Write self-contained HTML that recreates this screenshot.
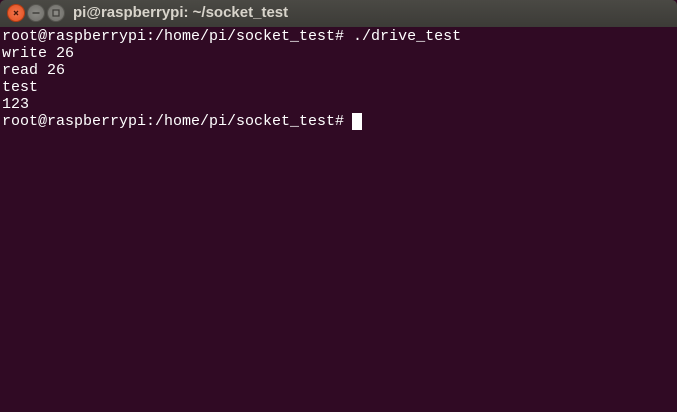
<!DOCTYPE html>
<html><head><style>
html,body{margin:0;padding:0;width:677px;height:412px;overflow:hidden;background:#300a24}
.tb{position:absolute;left:0;top:0;width:677px;height:27px;background:linear-gradient(#4a4944,#3c3b37);border-radius:5px 5px 0 0}
.b{position:absolute;top:4px;width:18px;height:18px;border-radius:50%;box-sizing:border-box}
.t{position:absolute;left:73px;top:4px;font:bold 15px "Liberation Sans",sans-serif;color:#d8d4cb}
pre{position:absolute;left:2px;top:28px;margin:0;font:15px/17px "Liberation Mono",monospace;color:#fff}
.cur{position:absolute;left:352px;top:113px;width:10px;height:17px;background:#fff}
</style></head><body>
<div class="tb">
<div class="b" style="left:7px;background:radial-gradient(#f4764e,#e2501f);border:1px solid #b13c14"><svg width="16" height="16" style="position:absolute;left:0;top:0"><path d="M6 6L10 10M10 6L6 10" stroke="#4a1a0a" stroke-width="1.3"/></svg></div>
<div class="b" style="left:27px;background:radial-gradient(#8c8b86,#6e6d68);border:1px solid #55544f"><svg width="16" height="16" style="position:absolute;left:0;top:0"><path d="M4.5 8H11.5" stroke="#3c3b37" stroke-width="1.4"/></svg></div>
<div class="b" style="left:47px;background:radial-gradient(#8c8b86,#6e6d68);border:1px solid #55544f"><svg width="16" height="16" style="position:absolute;left:0;top:0"><rect x="5" y="5" width="6" height="6" fill="none" stroke="#3c3b37" stroke-width="1.2"/></svg></div>
<div class="t">pi@raspberrypi: ~/socket_test</div>
</div>
<pre>root@raspberrypi:/home/pi/socket_test# ./drive_test
write 26
read 26
test
123
root@raspberrypi:/home/pi/socket_test# </pre>
<div class="cur"></div>
</body></html>
